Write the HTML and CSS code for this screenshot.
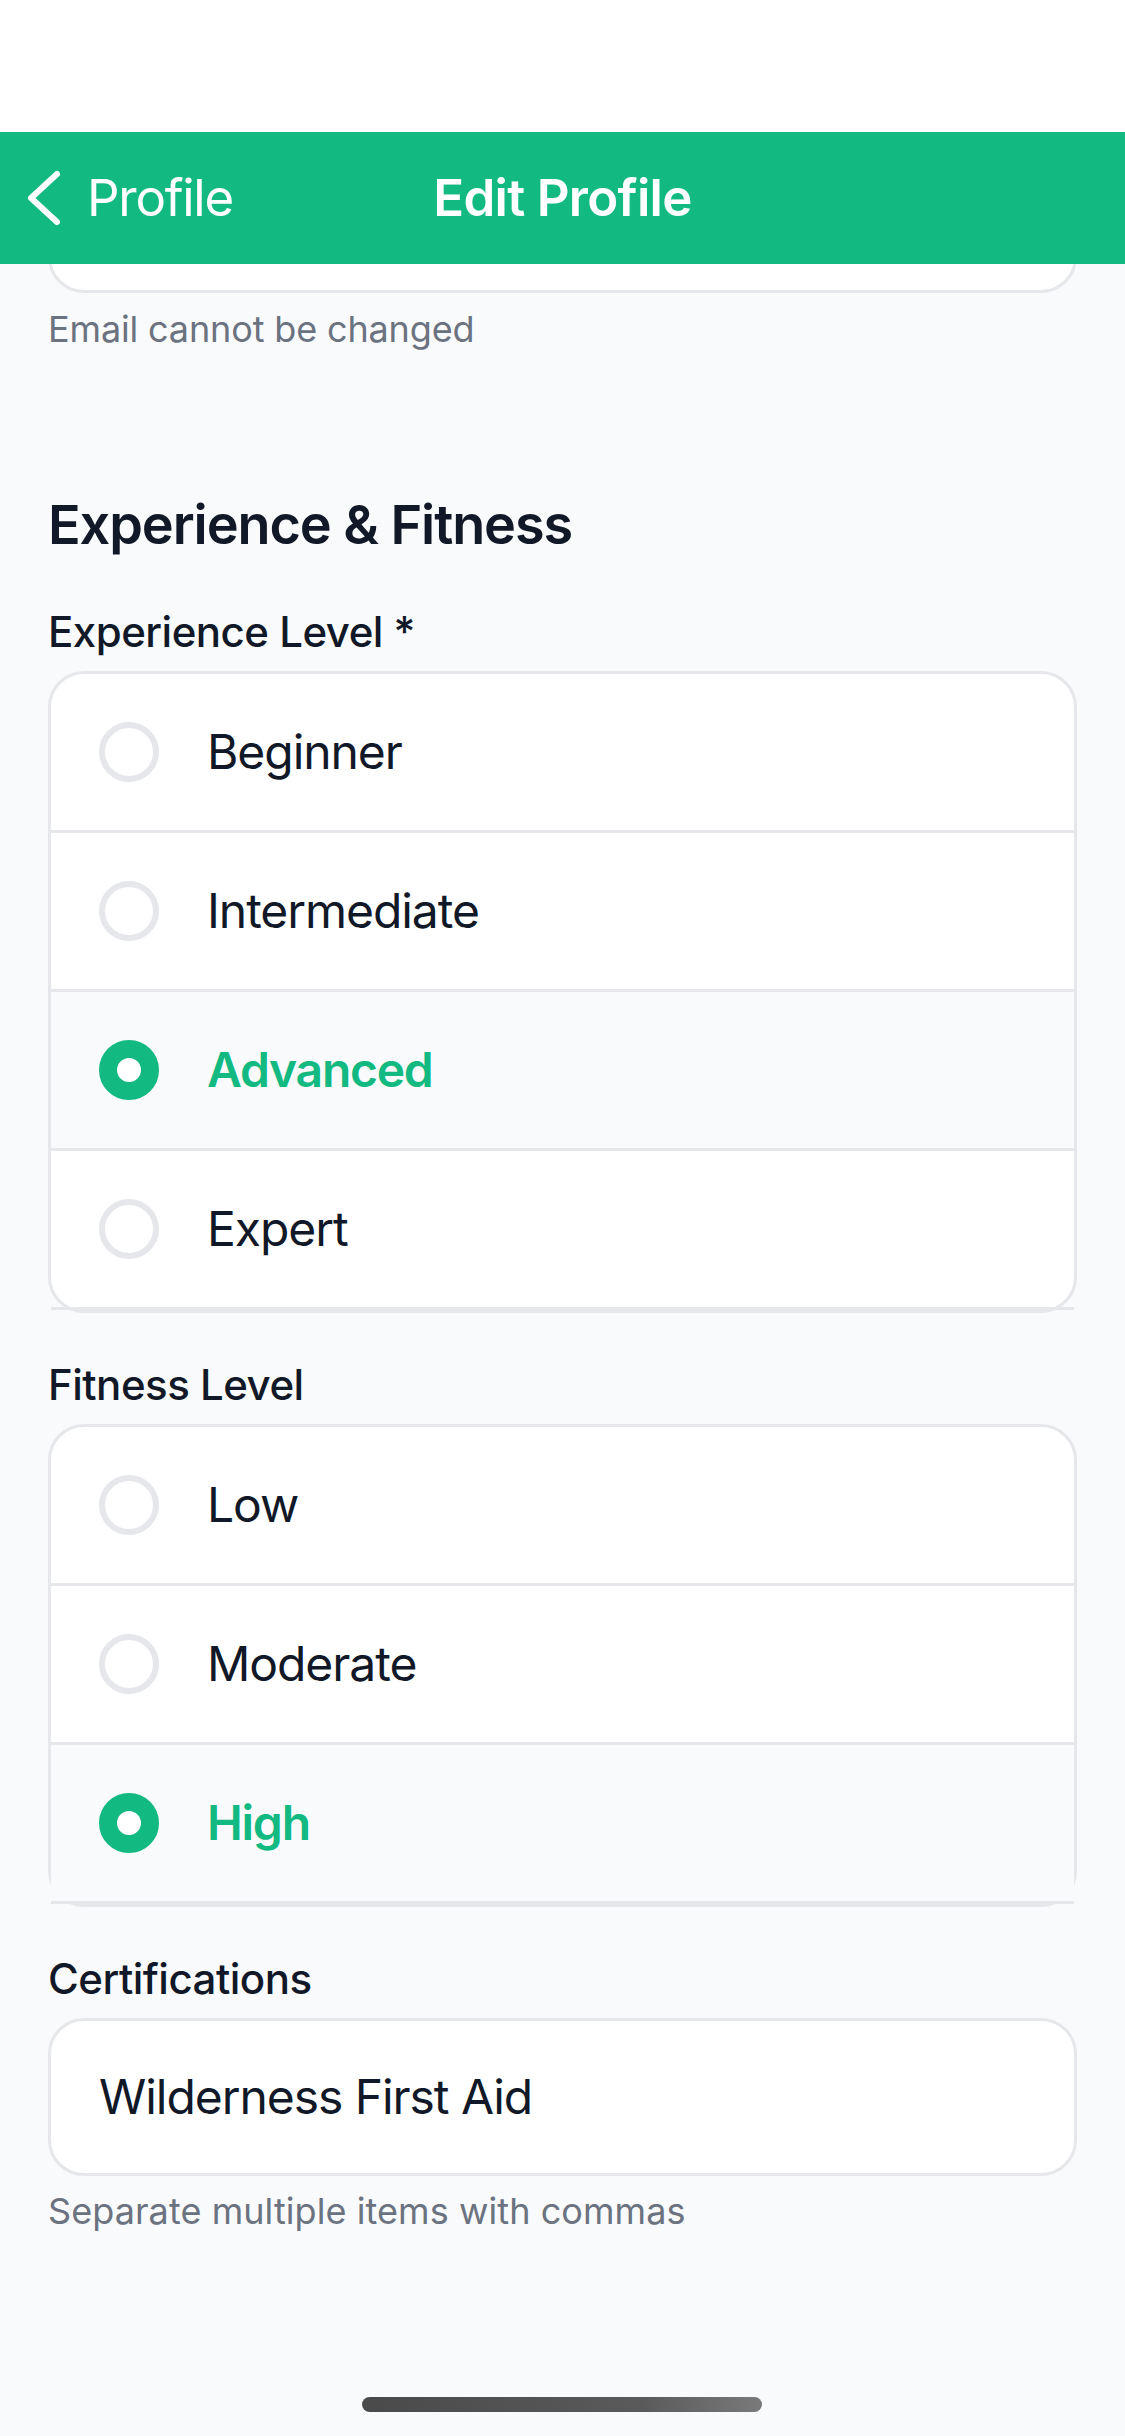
FILE: index.html
```html
<!DOCTYPE html>
<html lang="en">
<head>
<meta charset="utf-8">
<title>Edit Profile</title>
<link rel="stylesheet" href="styles.css">
</head>
<body>
<div class="screen">
  <div class="statusbar"></div>
  <header class="navbar">
    <div class="back">
      <svg class="chevron" width="40" height="60" viewBox="0 0 40 60" aria-hidden="true"><path d="M33 6 L7 30 L33 54"/></svg>
      <span class="back-text">Profile</span>
    </div>
    <h1 class="nav-title">Edit Profile</h1>
    <div class="nav-spacer"></div>
  </header>

  <main class="content">
    <div class="input input-email"></div>
    <p class="helper">Email cannot be changed</p>

    <h2 class="section-title">Experience &amp; Fitness</h2>

    <div class="field-label">Experience Level *</div>
    <div class="options">
      <div class="option"><span class="radio"></span><span class="option-text">Beginner</span></div>
      <div class="option"><span class="radio"></span><span class="option-text">Intermediate</span></div>
      <div class="option selected"><span class="radio"></span><span class="option-text">Advanced</span></div>
      <div class="option"><span class="radio"></span><span class="option-text">Expert</span></div>
    </div>

    <div class="field-label label-gap">Fitness Level</div>
    <div class="options">
      <div class="option"><span class="radio"></span><span class="option-text">Low</span></div>
      <div class="option"><span class="radio"></span><span class="option-text">Moderate</span></div>
      <div class="option selected"><span class="radio"></span><span class="option-text">High</span></div>
    </div>

    <div class="field-label label-gap">Certifications</div>
    <div class="input input-cert"><span class="input-value">Wilderness First Aid</span></div>
    <p class="helper helper-cert">Separate multiple items with commas</p>
  </main>

  <div class="home-indicator"></div>
</div>
</body>
</html>
```

FILE: styles.css
```css
* { box-sizing: border-box; }

html, body {
  margin: 0;
  padding: 0;
  background: #f9fafb;
}

body {
  font-family: Inter, "Noto Sans", "Liberation Sans", sans-serif;
  color: #111827;
  letter-spacing: -0.015em;
}

.screen {
  position: relative;
  width: 1125px;
  min-height: 2436px;
  background: #f9fafb;
  overflow: hidden;
}

.statusbar {
  height: 132px;
  background: #ffffff;
  position: relative;
  z-index: 3;
}

.navbar {
  position: absolute;
  top: 132px;
  left: 0;
  right: 0;
  height: 132px;
  background: #12b981;
  z-index: 2;
  display: grid;
  grid-template-columns: 1fr auto 1fr;
  align-items: center;
  color: #ffffff;
}

.back {
  display: flex;
  align-items: center;
  padding-left: 24px;
}

.chevron path {
  fill: none;
  stroke: #ffffff;
  stroke-width: 6;
  stroke-linecap: round;
  stroke-linejoin: round;
}

.back-text {
  margin-left: 23px;
  font-size: 51px;
  font-weight: 400;
  line-height: 60px;
  letter-spacing: -0.025em;
}

.nav-title {
  margin: 0;
  font-size: 51px;
  font-weight: 600;
  line-height: 60px;
  letter-spacing: -0.014em;
}

.content {
  padding: 3px 48px 0;
}

.input {
  height: 158px;
  border: 3px solid #e5e7eb;
  border-radius: 36px;
  background: #ffffff;
  padding: 48px 48px;
}

.input-value {
  display: block;
  font-size: 48px;
  line-height: 56px;
  color: #111827;
  letter-spacing: -0.022em;
}

.helper {
  margin: 14px 0 0;
  font-size: 36px;
  line-height: 44px;
  color: #6b7280;
  letter-spacing: -0.004em;
}

.helper-cert {
  margin-top: 13px;
  letter-spacing: 0.002em;
}

.section-title {
  margin: 142px 0 0;
  font-size: 54px;
  font-weight: 600;
  line-height: 64px;
  letter-spacing: -0.02em;
}

.field-label {
  margin-top: 50px;
  font-size: 42px;
  font-weight: 500;
  line-height: 50px;
  letter-spacing: -0.012em;
}

.field-label.label-gap {
  margin-top: 47px;
}

.field-label + .options,
.field-label + .input {
  margin-top: 14px;
}

.options {
  border: 3px solid #e5e7eb;
  border-radius: 36px;
  background: #ffffff;
}

.option {
  display: flex;
  align-items: center;
  padding: 48px;
  border-bottom: 3px solid #e5e7eb;
}

.option.selected {
  background: #f9fafb;
}

.radio {
  flex: none;
  width: 60px;
  height: 60px;
  border-radius: 50%;
  border: 6px solid #e5e7eb;
  background: #ffffff;
}

.option.selected .radio {
  border: 18px solid #12b981;
}

.option-text {
  margin-left: 48px;
  font-size: 48px;
  line-height: 60px;
  letter-spacing: -0.022em;
  color: #111827;
}

.option.selected .option-text {
  color: #12b981;
  font-weight: 600;
  letter-spacing: -0.026em;
}

.home-indicator {
  position: absolute;
  left: 362px;
  bottom: 24px;
  width: 400px;
  height: 15px;
  border-radius: 8px;
  background: linear-gradient(90deg, #4a4a4a 0%, #5a5a5a 70%, #7a7a7a 100%);
}
```
